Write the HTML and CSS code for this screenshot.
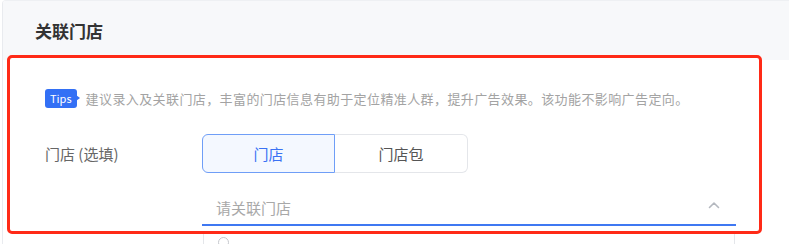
FILE: index.html
```html
<!DOCTYPE html>
<html lang="zh-CN">
<head>
    <meta charset="UTF-8">
    <meta name="viewport" content="width=device-width, initial-scale=1.0">
    <title>关联门店</title>
    <link rel="stylesheet" href="styles.css">
</head>
<body>
    <div class="card">
        <div class="card-header">关联门店</div>
        <div class="card-body">
            <div class="tips-row">
                <span class="tips-badge">Tips</span>
                <span class="tips-text">建议录入及关联门店，丰富的门店信息有助于定位精准人群，提升广告效果。该功能不影响广告定向。</span>
            </div>
            <div class="form-row">
                <div class="form-label">门店 (选填)</div>
                <div class="segmented">
                    <button class="segment active" type="button">门店</button>
                    <button class="segment" type="button">门店包</button>
                </div>
            </div>
            <div class="form-row">
                <div class="form-label"></div>
                <div class="select">
                    <span class="select-placeholder">请关联门店</span>
                    <svg class="select-arrow" width="12" height="8" viewBox="0 0 12 8">
                        <path d="M1.5 6.5 L6 2 L10.5 6.5" fill="none" stroke="#b4b8bf" stroke-width="1.6" stroke-linecap="round" stroke-linejoin="round"/>
                    </svg>
                    <div class="select-menu">
                        <span class="menu-dot"></span>
                    </div>
                </div>
            </div>
        </div>
    </div>
</body>
</html>
```

FILE: styles.css
```css
body {
    font-family: "Noto Sans CJK SC", "Noto Sans", sans-serif;
    background-color: white;
    color: #333;
    margin: 0;
    padding: 0 0 0 2px;
}
.card {
    border-left: 1px solid #e9ebef;
    border-top: 1px solid #eef0f3;
    border-top-left-radius: 4px;
    height: 243px;
    overflow: hidden;
}
.card-header {
    height: 59px;
    padding-left: 32px;
    background-color: #f7f8fa;
    display: flex;
    align-items: center;
    font-size: 17px;
    font-weight: 600;
    color: #333;
}
.card-body {
    margin: -5px 0 0 4px;
    width: 755px;
    box-sizing: border-box;
    padding: 30px 0 5px 35px;
    background-color: white;
    border: 3px solid #ff2a17;
    border-radius: 5px;
    position: relative;
}
.tips-row {
    display: flex;
    align-items: center;
    height: 20px;
}
.tips-badge {
    position: relative;
    background-color: #3370f5;
    color: white;
    font-size: 11px;
    line-height: 19px;
    height: 19px;
    padding: 0 5px;
    border-radius: 3px;
    margin-right: 9px;
}
.tips-badge::after {
    content: "";
    position: absolute;
    right: -3px;
    top: 6px;
    border-left: 4px solid #3370f5;
    border-top: 3.5px solid transparent;
    border-bottom: 3.5px solid transparent;
}
.tips-text {
    font-size: 13px;
    letter-spacing: 0.4px;
    color: #a3a3a3;
}
.form-row {
    display: flex;
    align-items: center;
    margin-top: 26px;
}
.form-row + .form-row {
    margin-top: 17px;
}
.form-label {
    width: 157px;
    flex-shrink: 0;
    font-size: 15px;
    color: #666;
}
.segmented {
    display: flex;
}
.segment {
    width: 133px;
    height: 39px;
    font-family: inherit;
    font-size: 15px;
    color: #555;
    background-color: white;
    border: 1px solid #e4e6ea;
    cursor: pointer;
}
.segment:first-child {
    border-radius: 6px 0 0 6px;
}
.segment:last-child {
    border-radius: 0 6px 6px 0;
    border-left: none;
}
.segment.active {
    color: #3a72f4;
    background-color: #f4f8ff;
    border-color: #6f9ef7;
}
.select {
    position: relative;
    width: 504px;
    height: 34px;
    border-bottom: 2px solid #3f78f2;
    display: flex;
    align-items: center;
    justify-content: space-between;
    padding: 0 16px 0 14px;
}
.select-placeholder {
    font-size: 15px;
    color: #a8a8a8;
}
.select-arrow {
    margin-top: -4px;
}
.select-menu {
    position: absolute;
    left: 1px;
    right: 1px;
    top: 44px;
    height: 40px;
    border-left: 1px solid #e4e6ea;
    border-right: 1px solid #e4e6ea;
    background-color: white;
}
.menu-dot {
    position: absolute;
    left: 14px;
    top: 3px;
    width: 9px;
    height: 9px;
    border: 1.5px solid #c4c7cc;
    border-radius: 50%;
}
```
